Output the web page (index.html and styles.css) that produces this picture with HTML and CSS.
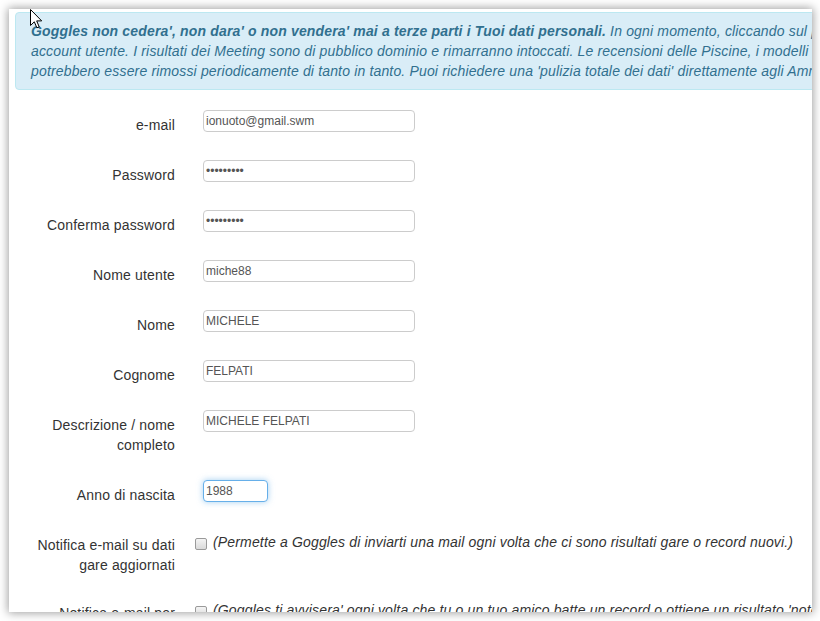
FILE: index.html
```html
<!DOCTYPE html>
<html lang="it">
<head>
<meta charset="utf-8">
<title>Goggles - Profilo</title>
<link rel="stylesheet" href="styles.css">
</head>
<body>
<div class="window">
  <div class="alert">
    <div class="aline"><b>Goggles non cedera', non dara' o non vendera' mai a terze parti i Tuoi dati personali.</b> In ogni momento, cliccando sul pulsante</div>
    <div class="aline">account utente. I risultati dei Meeting sono di pubblico dominio e rimarranno intoccati. Le recensioni delle Piscine, i modelli di</div>
    <div class="aline">potrebbero essere rimossi periodicamente di tanto in tanto. Puoi richiedere una 'pulizia totale dei dati' direttamente agli Amministratori.</div>
  </div>
  <form class="form">
    <div class="row"><label class="lbl">e-mail</label><div class="ctl"><input class="field" type="text" value="ionuoto@gmail.swm"></div></div>
    <div class="row"><label class="lbl">Password</label><div class="ctl"><input class="field" type="password" value="123456789"></div></div>
    <div class="row"><label class="lbl">Conferma password</label><div class="ctl"><input class="field" type="password" value="123456789"></div></div>
    <div class="row"><label class="lbl">Nome utente</label><div class="ctl"><input class="field" type="text" value="miche88"></div></div>
    <div class="row"><label class="lbl">Nome</label><div class="ctl"><input class="field" type="text" value="MICHELE"></div></div>
    <div class="row"><label class="lbl">Cognome</label><div class="ctl"><input class="field" type="text" value="FELPATI"></div></div>
    <div class="row"><label class="lbl">Descrizione / nome completo</label><div class="ctl"><input class="field" type="text" value="MICHELE FELPATI"></div></div>
    <div class="row"><label class="lbl">Anno di nascita</label><div class="ctl"><input class="field field-year" type="text" value="1988"></div></div>
    <div class="row row-check"><label class="lbl">Notifica e-mail su dati gare aggiornati</label><div class="ctl ctl-check"><input class="check" type="checkbox"><span class="hint">(Permette a Goggles di inviarti una mail ogni volta che ci sono risultati gare o record nuovi.)</span></div></div>
    <div class="row row-check"><label class="lbl">Notifica e-mail per record personali</label><div class="ctl ctl-check"><input class="check" type="checkbox"><span class="hint">(Goggles ti avvisera' ogni volta che tu o un tuo amico batte un record o ottiene un risultato 'notevole'.)</span></div></div>
  </form>
</div>
<svg class="cursor" width="13" height="20" viewBox="0 0 13 20"><path d="M0.5 0.5 L0.5 16.5 L4.3 12.8 L6.9 18.8 L9.2 17.8 L6.7 11.9 L11.7 11.9 Z" fill="#fff" stroke="#000" stroke-width="1" stroke-linejoin="miter"/></svg>
</body>
</html>
```
FILE: styles.css
```css
html, body {
  margin: 0;
  padding: 0;
  background: #ffffff;
  overflow: hidden;
  height: 621px;
}
body {
  position: relative;
  font-family: "Liberation Sans", Arial, Helvetica, sans-serif;
  font-size: 14px;
  line-height: 20px;
  letter-spacing: 0.16px;
  color: #333333;
}
.window {
  margin: 9px 0 0 9px;
  width: 803px;
  height: 603px;
  overflow: hidden;
  background: #ffffff;
  box-shadow: 0 0 9px 1px rgba(0, 0, 0, 0.38);
}
.alert {
  margin: 3px 0 0 6px;
  width: 1000px;
  padding: 8px 15px 8px;
  border: 1px solid #bce8f1;
  border-radius: 4px;
  background: #d9edf7;
  color: #31708f;
  font-style: italic;
}
.aline {
  white-space: nowrap;
}
.aline b {
  font-weight: bold;
}
.form {
  margin-top: 20px;
}
.row {
  display: flex;
  align-items: flex-start;
  margin-bottom: 25px;
}
.row-check {
  margin-bottom: 23px;
}
.lbl {
  box-sizing: border-box;
  width: 166px;
  flex: none;
  padding: 5px 0 0 21px;
  text-align: right;
}
.ctl {
  margin-left: 28px;
  display: flex;
  align-items: flex-start;
}
.field {
  box-sizing: border-box;
  width: 212px;
  height: 22px;
  margin: 0;
  padding: 0 2px;
  border: 1px solid #cccccc;
  border-radius: 4px;
  font-family: "Liberation Sans", Arial, sans-serif;
  font-size: 12px;
  letter-spacing: 0;
  color: #555555;
  background: #ffffff;
  outline: none;
}
.field-year {
  width: 65px;
  border-color: #66afe9;
  box-shadow: 0 0 6px rgba(102, 175, 233, 0.6);
}
.ctl-check {
  margin-left: 20px;
  padding-top: 2px;
  white-space: nowrap;
}
.check {
  appearance: none;
  -webkit-appearance: none;
  box-sizing: border-box;
  flex: none;
  width: 12px;
  height: 12px;
  margin: 6px 6px 0 0;
  border: 1px solid #9a9a9a;
  border-radius: 2px;
  background: linear-gradient(#f4f4f4, #dadada);
}
.hint {
  font-style: italic;
  color: #333333;
}
.cursor {
  position: absolute;
  left: 30px;
  top: 9px;
}
```
